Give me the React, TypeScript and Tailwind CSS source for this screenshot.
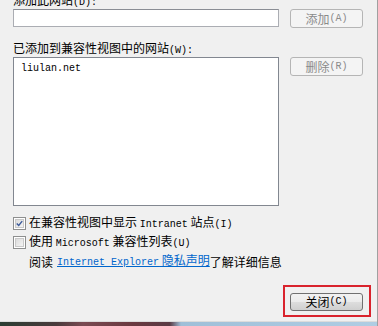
import React from "react";

const L = ({ children }: { children: React.ReactNode }) => (
  <span className="font-['Liberation_Mono',monospace] text-[10px]">{children}</span>
);

const Checkbox = ({ checked }: { checked?: boolean }) => (
  <div className="w-[13px] h-[13px] border border-[#8e8f8f] bg-white p-[1px] shrink-0">
    <div className="w-full h-full bg-[linear-gradient(135deg,#dcdcdc_0%,#f4f4f4_100%)] border border-[#c9c9c9] flex items-center justify-center">
      {checked && (
        <svg width="9" height="9" viewBox="0 0 9 9">
          <path d="M1 4.5 L3.5 7 L8 1.5" fill="none" stroke="#3c5a9a" strokeWidth="1.8" />
        </svg>
      )}
    </div>
  </div>
);

const DisabledButton = ({ children }: { children: React.ReactNode }) => (
  <div className="ml-[11px] w-[73px] h-[19px] border border-[#b5b5b5] rounded-[3px] bg-[#f4f4f4] text-[#8a8a8a] flex items-center justify-center leading-[12px]">
    {children}
  </div>
);

export default function App() {
  return (
    <div className="w-[378px] h-[326px] bg-[#f0f0f0] overflow-hidden flex flex-col text-[12px] leading-[12px] text-black font-['Noto_Sans_CJK_SC',sans-serif] border-r border-[#a0a0a0]">
      <div className="flex-1 pl-[13px] flex flex-col">
        <div className="mt-[-6px] h-[12px] whitespace-nowrap">
          添加此网站<L>(D):</L>
        </div>
        <div className="mt-[3px] flex items-start">
          <div className="w-[266px] h-[18px] border border-[#abadb3] border-t-[#8a8d94] bg-white" />
          <DisabledButton>
            添加<L>(A)</L>
          </DisabledButton>
        </div>
        <div className="mt-[14px] h-[12px] whitespace-nowrap">
          已添加到兼容性视图中的网站<L>(W):</L>
        </div>
        <div className="mt-[3px] flex items-start">
          <div className="w-[266px] h-[149px] border border-[#828790] bg-white pl-[7px] pt-[5px]">
            <div className="font-['Liberation_Mono',monospace] text-[10px] leading-[12px]">liulan.net</div>
          </div>
          <DisabledButton>
            删除<L>(R)</L>
          </DisabledButton>
        </div>
        <div className="mt-[11px] flex items-center h-[13px] whitespace-nowrap">
          <Checkbox checked />
          <span className="ml-[3px]">
            在兼容性视图中显示 <L>Intranet</L> 站点<L>(I)</L>
          </span>
        </div>
        <div className="mt-[6px] flex items-center h-[13px] whitespace-nowrap">
          <Checkbox />
          <span className="ml-[3px]">
            使用 <L>Microsoft</L> 兼容性列表<L>(U)</L>
          </span>
        </div>
        <div className="mt-[6px] h-[13px] flex items-center pl-[16px] whitespace-nowrap">
          阅读 <span className="ml-[4px] text-[#0066cc] underline">
            <L>Internet Explorer</L> 隐私声明
          </span>
          了解详细信息
        </div>
        <div className="mt-[17px] flex justify-end pr-[6px]">
          <div className="w-[88px] h-[32px] border-2 border-[#d9232d] pl-[5px] pt-[6px]">
            <div className="w-[73px] h-[18px] border border-[#707070] rounded-[3px] bg-[linear-gradient(to_bottom,#f2f2f2_0%,#ebebeb_50%,#dddddd_51%,#cfcfcf_100%)] flex items-center justify-center">
              关闭<L>(C)</L>
            </div>
          </div>
        </div>
      </div>
      <div className="h-[1px] bg-[#dcdcdc]" />
      <div className="h-[4px] bg-[linear-gradient(to_right,#2b3d33_0%,#4a3a3c_15%,#7a4a52_22%,#6b3940_35%,#5a3a44_45%,#9fbfd8_48%,#b0cde3_100%)]" />
    </div>
  );
}
